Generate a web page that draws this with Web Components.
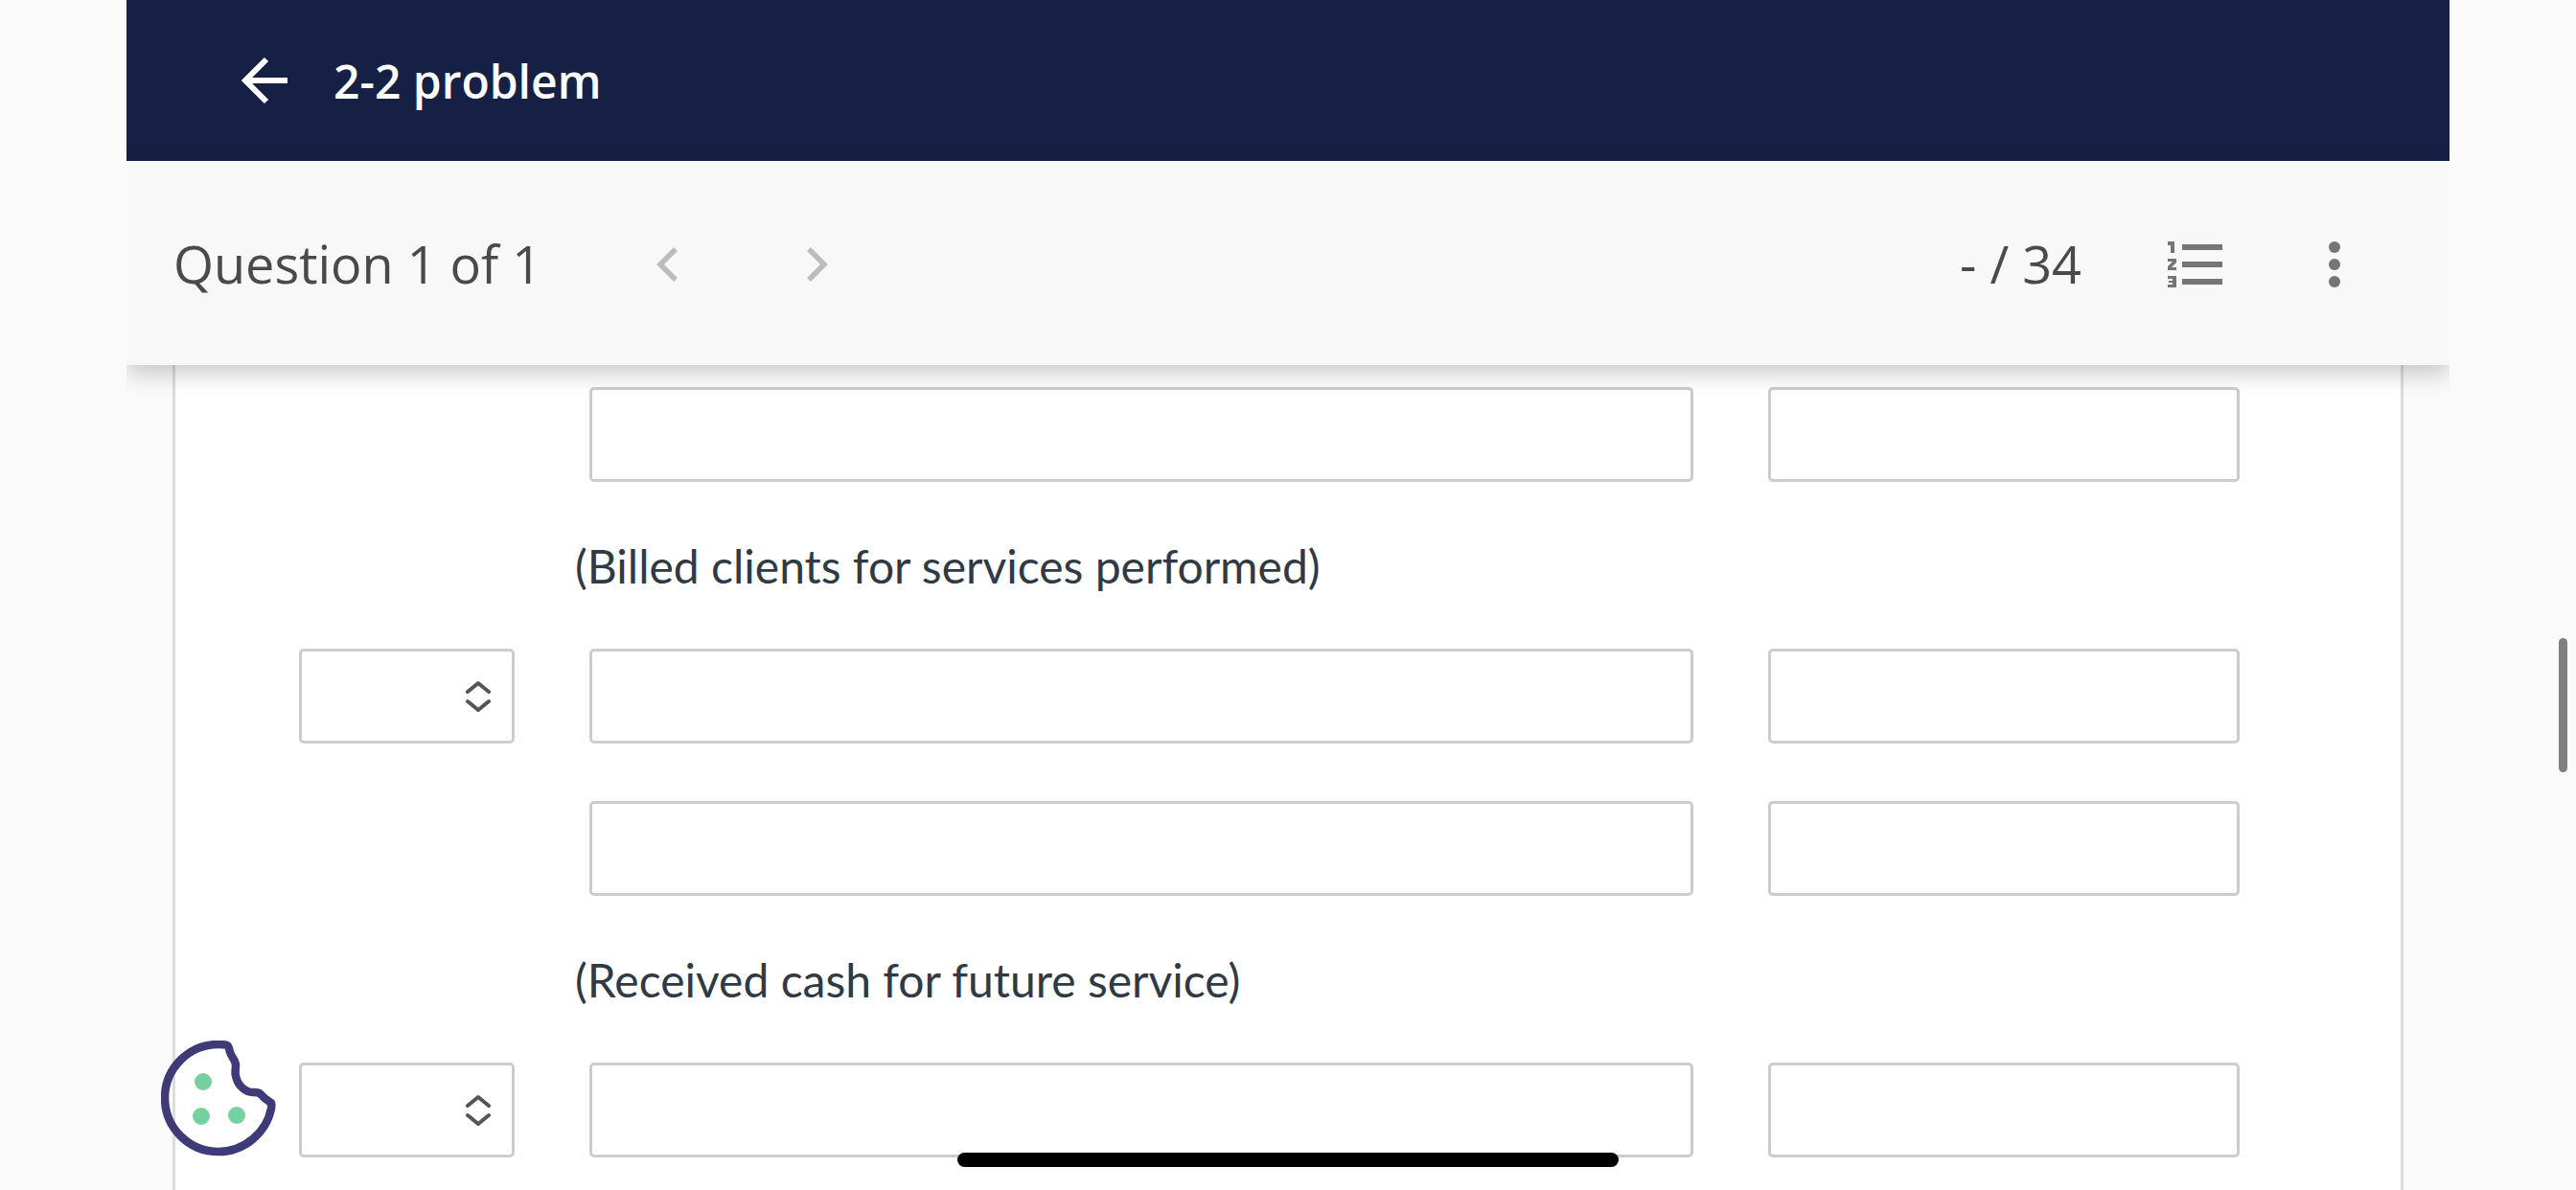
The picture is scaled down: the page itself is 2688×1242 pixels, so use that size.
<!DOCTYPE html>
<html>
<head>
<meta charset="utf-8">
<title>2-2 problem</title>
<style>
    html, body {
        margin: 0;
        height: 100%;
        overflow: hidden;
        background: #fafafa;
    }
</style>
</head>
<body>
<quiz-page>
    <quiz-header slot="header">2-2 problem</quiz-header>
    <quiz-toolbar slot="toolbar" position="Question 1 of 1" score="- / 34"></quiz-toolbar>
    <journal-row></journal-row>
    <journal-note>(Billed clients for services performed)</journal-note>
    <journal-row account></journal-row>
    <journal-row class="next"></journal-row>
    <journal-note>(Received cash for future service)</journal-note>
    <journal-row account></journal-row>
</quiz-page>
<cookie-button></cookie-button>
<page-scrollbar></page-scrollbar>
<home-indicator></home-indicator>

<script>
class QuizPage extends HTMLElement {
    constructor() {
        super();
        this.attachShadow({ mode: 'open' });
        this.shadowRoot.innerHTML = `
            <style>
                :host {
                    display: flex;
                    flex-direction: column;
                    height: 1242px;
                    margin: 0 132px;
                    overflow: hidden;
                }
                .panel {
                    flex: 1;
                    margin: 0 48px;
                    padding: 23px 0 0 129px;
                    background: #ffffff;
                    border-left: 3px solid #dcdcdc;
                    border-right: 3px solid #dcdcdc;
                }
            </style>
            <slot name="header"></slot>
            <slot name="toolbar"></slot>
            <div class="panel"><slot></slot></div>
        `;
    }
}

class QuizHeader extends HTMLElement {
    constructor() {
        super();
        this.attachShadow({ mode: 'open' });
        this.shadowRoot.innerHTML = `
            <style>
                :host {
                    display: flex;
                    align-items: center;
                    gap: 45px;
                    height: 168px;
                    padding-left: 119px;
                    background: #162044;
                    color: #ffffff;
                    font: 600 48px "Open Sans", sans-serif;
                }
                svg { display: block; }
            </style>
            <svg width="52" height="52" viewBox="0 0 52 52" fill="none" stroke="#fff" stroke-width="6">
                <path d="M49 26H6M27 4 5 26l22 22"/>
            </svg>
            <slot></slot>
        `;
    }
}

class QuizToolbar extends HTMLElement {
    constructor() {
        super();
        this.attachShadow({ mode: 'open' });
        this.shadowRoot.innerHTML = `
            <style>
                :host {
                    display: flex;
                    align-items: center;
                    position: relative;
                    height: 213px;
                    padding: 0 114px 0 49px;
                    background: #f8f8f8;
                    color: #4a4a4a;
                    font: 400 54px "Open Sans", sans-serif;
                    box-shadow: 0 8px 24px rgba(0, 0, 0, 0.22);
                }
                .pager {
                    display: flex;
                    gap: 133px;
                    margin: 2px 0 0 119px;
                }
                .score { margin-left: auto; }
                .list { margin: 3px 0 0 90px; }
                .more { margin: 3px 0 0 110px; }
                svg { display: block; }
            </style>
            <span class="position"></span>
            <div class="pager">
                <svg width="24" height="36" viewBox="0 0 24 36" fill="none" stroke="#bcbcbc" stroke-width="5.5"><path d="M21 2 5 18l16 16"/></svg>
                <svg width="24" height="36" viewBox="0 0 24 36" fill="none" stroke="#bcbcbc" stroke-width="5.5"><path d="M3 2l16 16L3 34"/></svg>
            </div>
            <span class="score"></span>
            <svg class="list" width="58" height="48" viewBox="0 0 58 48" fill="#757575">
                <rect x="15" y="3" width="42" height="6"/><rect x="15" y="21" width="42" height="6"/><rect x="15" y="39" width="42" height="6"/>
                <path d="M0 0h7v12H3V4H0z"/>
                <path d="M0 18h9v4l-5 5h5v3H0v-4l5-5H0z"/>
                <path d="M0 36h9v12H0v-3h5v-2H1v-2h4v-2H0z"/>
            </svg>
            <svg class="more" width="12" height="48" viewBox="0 0 12 48" fill="#757575">
                <circle cx="6" cy="6" r="6"/><circle cx="6" cy="24" r="6"/><circle cx="6" cy="42" r="6"/>
            </svg>
        `;
    }

    connectedCallback() {
        this.shadowRoot.querySelector('.position').textContent = this.getAttribute('position');
        this.shadowRoot.querySelector('.score').textContent = this.getAttribute('score');
    }
}

class JournalRow extends HTMLElement {
    constructor() {
        super();
        this.attachShadow({ mode: 'open' });
        this.shadowRoot.innerHTML = `
            <style>
                :host {
                    display: grid;
                    grid-template-columns: 225px 1152px 492px;
                    column-gap: 78px;
                    height: 99px;
                }
                :host(.next) { margin-top: 60px; }
                .field {
                    box-sizing: border-box;
                    background: #ffffff;
                    border: 3px solid #cccccc;
                    border-radius: 5px;
                }
                .select {
                    display: flex;
                    align-items: center;
                    justify-content: flex-end;
                    padding-right: 20px;
                }
                .select[hidden] { display: block; visibility: hidden; }
                svg { display: block; }
            </style>
            <div class="field select" hidden>
                <svg width="30" height="36" viewBox="0 0 30 36" fill="none" stroke="#555" stroke-width="4" stroke-linecap="round" stroke-linejoin="round">
                    <path d="M4 13 15 4l11 9M4 23l11 9 11-9"/>
                </svg>
            </div>
            <div class="field"></div>
            <div class="field"></div>
        `;
    }

    connectedCallback() {
        this.shadowRoot.querySelector('.select').hidden = !this.hasAttribute('account');
    }
}

class JournalNote extends HTMLElement {
    constructor() {
        super();
        this.attachShadow({ mode: 'open' });
        this.shadowRoot.innerHTML = `
            <style>
                :host {
                    display: flex;
                    align-items: center;
                    height: 174px;
                    padding-left: 288px;
                    color: #2f3a45;
                    font: 400 48px Lato, sans-serif;
                }
            </style>
            <slot></slot>
        `;
    }
}

class CookieButton extends HTMLElement {
    constructor() {
        super();
        this.attachShadow({ mode: 'open' });
        this.shadowRoot.innerHTML = `
            <style>
                :host {
                    position: fixed;
                    left: 168px;
                    top: 1086px;
                    width: 122px;
                    height: 122px;
                }
                svg { display: block; }
            </style>
            <svg width="122" height="122" viewBox="0 0 122 122" fill="none">
                <path d="M60 4C64 4 67 4 69 5C71 6 71 9 72 12C73 17 78 20 78 26C78 29 77 33 78 37C80 47 88 54 96 54C100 54 102 54 105 57C108 61 112 63 115 65C116 66 115 69 115 71C110 96 87 116 60 116C29 116 4 91 4 60C4 29 29 4 60 4Z" stroke="#3f3a78" stroke-width="8.5" stroke-linejoin="round"/>
                <circle cx="44" cy="43" r="9" fill="#76d1a0"/>
                <circle cx="42" cy="79" r="9" fill="#76d1a0"/>
                <circle cx="79" cy="78" r="9" fill="#76d1a0"/>
            </svg>
        `;
    }
}

class PageScrollbar extends HTMLElement {
    constructor() {
        super();
        this.attachShadow({ mode: 'open' });
        this.shadowRoot.innerHTML = `
            <style>
                :host {
                    position: fixed;
                    left: 2670px;
                    top: 666px;
                    width: 9px;
                    height: 140px;
                    border-radius: 4.5px;
                    background: #808080;
                }
            </style>
        `;
    }
}

class HomeIndicator extends HTMLElement {
    constructor() {
        super();
        this.attachShadow({ mode: 'open' });
        this.shadowRoot.innerHTML = `
            <style>
                :host {
                    position: fixed;
                    left: 999px;
                    top: 1203px;
                    width: 690px;
                    height: 15px;
                    border-radius: 8px;
                    background: #000000;
                }
            </style>
        `;
    }
}

customElements.define('quiz-page', QuizPage);
customElements.define('quiz-header', QuizHeader);
customElements.define('quiz-toolbar', QuizToolbar);
customElements.define('journal-row', JournalRow);
customElements.define('journal-note', JournalNote);
customElements.define('cookie-button', CookieButton);
customElements.define('page-scrollbar', PageScrollbar);
customElements.define('home-indicator', HomeIndicator);
</script>
</body>
</html>
